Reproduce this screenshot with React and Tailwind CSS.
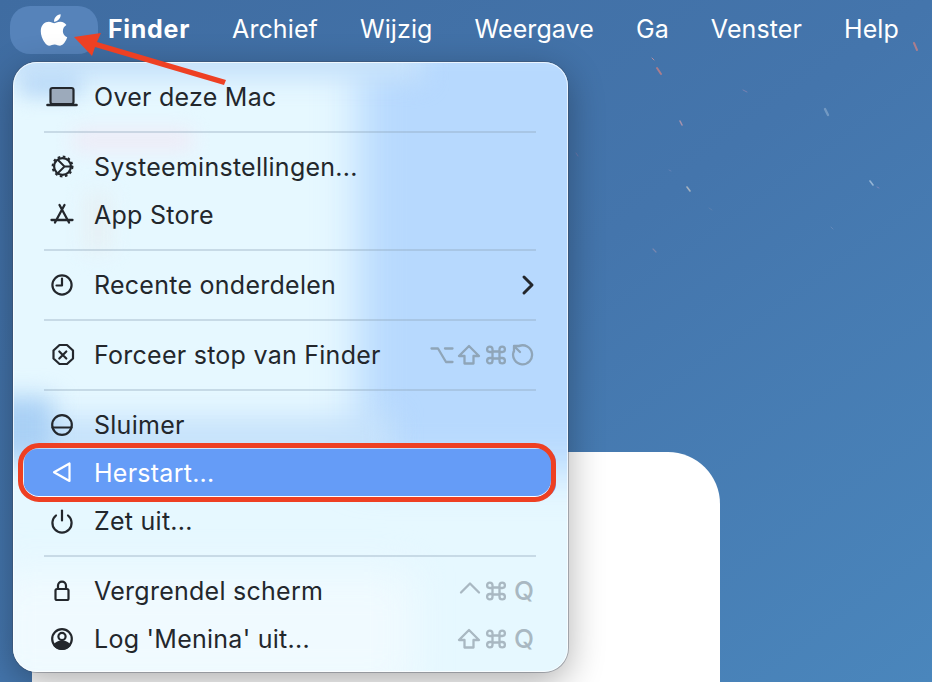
import React from "react";

const ink = "#23272c";

const Icon = ({ children, color = ink }) => (
  <svg width="36" height="36" viewBox="0 0 36 36" fill="none" stroke={color} strokeWidth="2.2" strokeLinecap="round" strokeLinejoin="round">
    {children}
  </svg>
);

const icons = {
  laptop: (
    <Icon>
      <rect x="6.5" y="9" width="23" height="16" rx="2" fill="#9caabb" />
      <path d="M3.5 26h29" strokeWidth="2.6" />
    </Icon>
  ),
  gear: (
    <Icon>
      <circle cx="18.500" cy="17.500" r="8.400" />
      <circle cx="18.500" cy="17.500" r="9.900" strokeWidth="2" strokeDasharray="2.600 2.580" strokeLinecap="butt" />
      <path d="M14 11l6.500 6.500L14 24M20.500 17.500h8" strokeWidth="1.900" />
    </Icon>
  ),
  store: (
    <Icon>
      <path d="M15.500 8L25 25.500M20.500 8L11 25.500M7.500 23h21" strokeWidth="2.300" />
    </Icon>
  ),
  clock: (
    <Icon>
      <circle cx="18" cy="18" r="9.6" />
      <path d="M18 11.5V18.5H12.5" />
    </Icon>
  ),
  stop: (
    <Icon>
      <path d="M15 8h7.5l6 5.5v8l-6 5.5H15l-6-5.5v-8z" transform="translate(0.5 0)" />
      <path d="M15.3 14.5l7 7M22.3 14.5l-7 7" />
    </Icon>
  ),
  sleep: (
    <Icon>
      <circle cx="18" cy="18" r="9.8" />
      <path d="M8.5 20.5h19" />
    </Icon>
  ),
  restart: (
    <Icon color="#ffffff">
      <path d="M25.5 8.5V26L10 17.3z" />
    </Icon>
  ),
  power: (
    <Icon>
      <path d="M12 12.5a9.6 9.6 0 1 0 12 0" />
      <path d="M18 7.5v10" />
    </Icon>
  ),
  lock: (
    <Icon>
      <rect x="11.5" y="16" width="13" height="11" rx="1.6" />
      <path d="M14 16v-3.4a4 4 0 0 1 8 0V16" />
    </Icon>
  ),
  user: (
    <Icon>
      <circle cx="18" cy="18" r="9.8" />
      <circle cx="18" cy="15.5" r="3.6" />
      <path d="M10.5 24.5c1.5-3 4.5-4 7.5-4s6 1 7.5 4c-2 2.2-4.7 3.3-7.5 3.3s-5.500-1.100-7.500-3.300z" fill={ink} />
    </Icon>
  ),
};

const Chevron = () => (
  <svg width="14" height="22" viewBox="0 0 14 22" fill="none" stroke={ink} strokeWidth="3" strokeLinecap="round" strokeLinejoin="round">
    <path d="M3 3l8 8-8 8" />
  </svg>
);

// keyboard modifier symbols
const keyPaths = {
  option: <path d="M1.500 5.500h6.500l8 13.500h6.500M15 5.500h7.500" />,
  shift: <path d="M12 3l10 10h-5.500v7.500h-9V13H2z" />,
  cmd: (
    <path d="M8.500 8.500h7v7h-7zM8.500 8.500V6.300a2.700 2.700 0 1 0-2.700 2.700h2.700M15.500 8.500V6.300a2.700 2.700 0 1 1 2.700 2.700h-2.700M8.500 15.500v2.200a2.700 2.700 0 1 1-2.700-2.700h2.700M15.500 15.500v2.200a2.700 2.700 0 1 0 2.700-2.700h-2.700" />
  ),
  ctrl: <path d="M4 13.500L13 4.500l9 9" />,
  reopen: (
    <>
      <path d="M8 3a9.500 9.500 0 1 1-5.500 6" />
      <path d="M3 3l6 6M3 8.500V3h5.500" />
    </>
  ),
};

const Keys = ({ keys, color }) => (
  <div className="-mr-[1.5px] flex items-center" style={{ color }}>
    {keys.map((k, i) => (
      <span key={i} className="flex h-[27px] w-[27px] items-center justify-center">
        {k === "Q" ? (
          <span className="pl-[2px] text-[26px] font-medium leading-none">Q</span>
        ) : (
          <svg width="24" height="24" viewBox="0 0 24 24" fill="none" stroke="currentColor" strokeWidth="2.300" strokeLinejoin="round" strokeLinecap="round">
            {keyPaths[k]}
          </svg>
        )}
      </span>
    ))}
  </div>
);

const Row = ({ icon, label, right, active }) => (
  <div className={`relative flex h-12 items-center pl-5 pr-[21px] ${active ? "rounded-[13px] bg-[#659cf7] text-white" : "text-[#23272c]"}`}>
    <span className="mr-[14px] flex w-9 justify-center">{icons[icon]}</span>
    <span className="flex-1 whitespace-nowrap pt-[2px] tracking-[0.26px]">{label}</span>
    {right}
    {active && (
      <div className="pointer-events-none absolute -top-[6px] -bottom-[5px] -left-[6px] right-0 rounded-[21px] border-[5px] border-[#ee4023] shadow-[inset_0_-1px_0_#ffffff]" />
    )}
  </div>
);

const Sep = () => <div className="mx-5 my-[10px] h-[2px] bg-[#8ba3b8]/35" />;

const barItems = ["Archief", "Wijzig", "Weergave", "Ga", "Venster", "Help"];

// little light streaks in the wallpaper
const streaks = [
  [652, 58, 654, 60, "#e79a9a", 1], [657, 68, 661, 74, "#d9827f", 2], [914, 43, 917, 50, "#d9827f", 2],
  [680, 121, 682, 125, "#cfa0ae", 1.6], [743, 90, 747, 92, "#8f87b5", 1], [825, 109, 828, 115, "#86a8cc", 2.4],
  [687, 187, 690, 191, "#d0ccc8", 1.6], [870, 181, 873, 185, "#b8cfe6", 1.6], [877, 187, 879, 188, "#8f8cc0", 1],
  [576, 153, 578, 156, "#7a78a8", 1], [669, 170, 671, 171, "#6f86b8", 1], [709, 208, 712, 210, "#6585b0", 1],
  [653, 249, 656, 252, "#8f8fb0", 1.2], [831, 227, 833, 229, "#6f8fbd", 1],
];

export default function App() {
  return (
    <div className="relative h-[682px] w-[932px] overflow-hidden bg-gradient-to-br from-[#3f6ca1] via-[#4475ac] to-[#4a86bc] text-[25px] [font-family:Inter,'Liberation_Sans',sans-serif]">
      <svg className="absolute inset-0" width="932" height="682" fill="none" strokeLinecap="round">
        {streaks.map(([x1, y1, x2, y2, c, w], i) => (
          <line key={i} x1={x1} y1={y1} x2={x2} y2={y2} stroke={c} strokeWidth={w} opacity="0.7" />
        ))}
      </svg>

      {/* window behind the menu */}
      <div className="absolute left-8 top-[452px] h-[260px] w-[688px] rounded-tr-[52px] bg-white" />

      {/* menu bar */}
      <div className="relative flex h-[62px] items-start pl-[10px] pt-[6px] text-white">
        <div className="flex h-12 w-[88px] items-center justify-center rounded-[20px] bg-[#5683ba]">
          <svg width="30" height="36" viewBox="0 0 384 512" fill="#ffffff">
            <path d="M318.700 268.700c-.2-36.700 16.400-64.400 50-84.800-18.800-26.900-47.200-41.700-84.700-44.600-35.500-2.800-74.300 20.700-88.500 20.700-15 0-49.400-19.700-76.400-19.700C63.300 141.200 4 184.800 4 273.500q0 39.300 14.400 81.200c12.800 36.700 59 126.700 107.200 125.200 25.200-.6 43-17.900 75.800-17.900 31.800 0 48.300 17.900 76.400 17.900 48.600-.7 90.400-82.500 102.600-119.300-65.200-30.700-61.700-90-61.700-91.900zm-56.600-164.200c27.300-32.400 24.800-61.900 24-72.500-24.100 1.400-52 16.400-67.900 34.900-17.500 19.800-27.800 44.300-25.600 71.900 26.100 2 49.900-11.400 69.500-34.300z" />
          </svg>
        </div>
        <div className="ml-[11px] flex h-12 items-center gap-[42px] tracking-[0.1px]">
          <span className="-ml-[1px] font-bold tracking-[0.7px]">Finder</span>
          {barItems.map((t) => (
            <span key={t}>{t}</span>
          ))}
        </div>
      </div>

      {/* apple menu */}
      <div className="relative ml-[13px] h-[610px] w-[555px]">
        <div className="absolute inset-0 overflow-hidden rounded-[24px] bg-[#e6f8ff] shadow-[0_0_0_1px_rgba(60,70,85,0.35),0_10px_36px_rgba(0,0,0,0.32)]">
          <div className="absolute -top-10 left-[345px] h-[450px] w-[260px] bg-[#b7d9fe] blur-[20px]" />
          <div className="absolute -top-8 left-[-10px] h-[50px] w-[420px] bg-[#c7e2fb] blur-[12px]" />
          <div className="absolute left-[-20px] top-[355px] h-[44px] w-[400px] bg-[#c5e1fb] blur-[14px]" />
          <div className="absolute left-[-20px] top-[335px] h-[60px] w-[60px] bg-[#a9d0f5] blur-[12px]" />
          <div className="absolute left-[8px] top-[10px] h-[24px] w-[60px] bg-[#b9d9f7] blur-[10px]" />
          <div className="absolute left-[60px] top-[68px] h-[20px] w-[120px] bg-[#f0eaf6] blur-[10px]" />
          <div className="absolute left-[70px] top-[130px] h-[60px] w-[30px] bg-[#e6f1f6] blur-[10px]" />
          <div className="absolute bottom-[-20px] left-[-20px] h-[120px] w-[420px] bg-[#f0faff] blur-[20px]" />
          <div className="absolute left-0 top-0 h-[610px] w-[555px] rounded-[24px] border border-white/70" />
        </div>

        <div className="relative pb-[9px] pl-[11px] pr-[12px] pt-[11px]">
          <Row icon="laptop" label="Over deze Mac" />
          <Sep />
          <Row icon="gear" label="Systeeminstellingen..." />
          <Row icon="store" label="App Store" />
          <Sep />
          <Row icon="clock" label="Recente onderdelen" right={<Chevron />} />
          <Sep />
          <Row icon="stop" label="Forceer stop van Finder" right={<Keys color="#8fa5b8" keys={["option", "shift", "cmd", "reopen"]} />} />
          <Sep />
          <Row icon="sleep" label="Sluimer" />
          <Row icon="restart" label="Herstart..." active />
          <Row icon="power" label="Zet uit..." />
          <Sep />
          <Row icon="lock" label="Vergrendel scherm" right={<Keys color="#a9b8c2" keys={["ctrl", "cmd", "Q"]} />} />
          <Row icon="user" label="Log 'Menina' uit..." right={<Keys color="#a9b8c2" keys={["shift", "cmd", "Q"]} />} />
        </div>
      </div>

      {/* red arrow pointing at the apple */}
      <svg className="pointer-events-none absolute left-0 top-0" width="240" height="100" fill="#ee4023">
        <path d="M74 37l27-4-4 9 129 38-2 5-129-38-3 9z" />
      </svg>
    </div>
  );
}
